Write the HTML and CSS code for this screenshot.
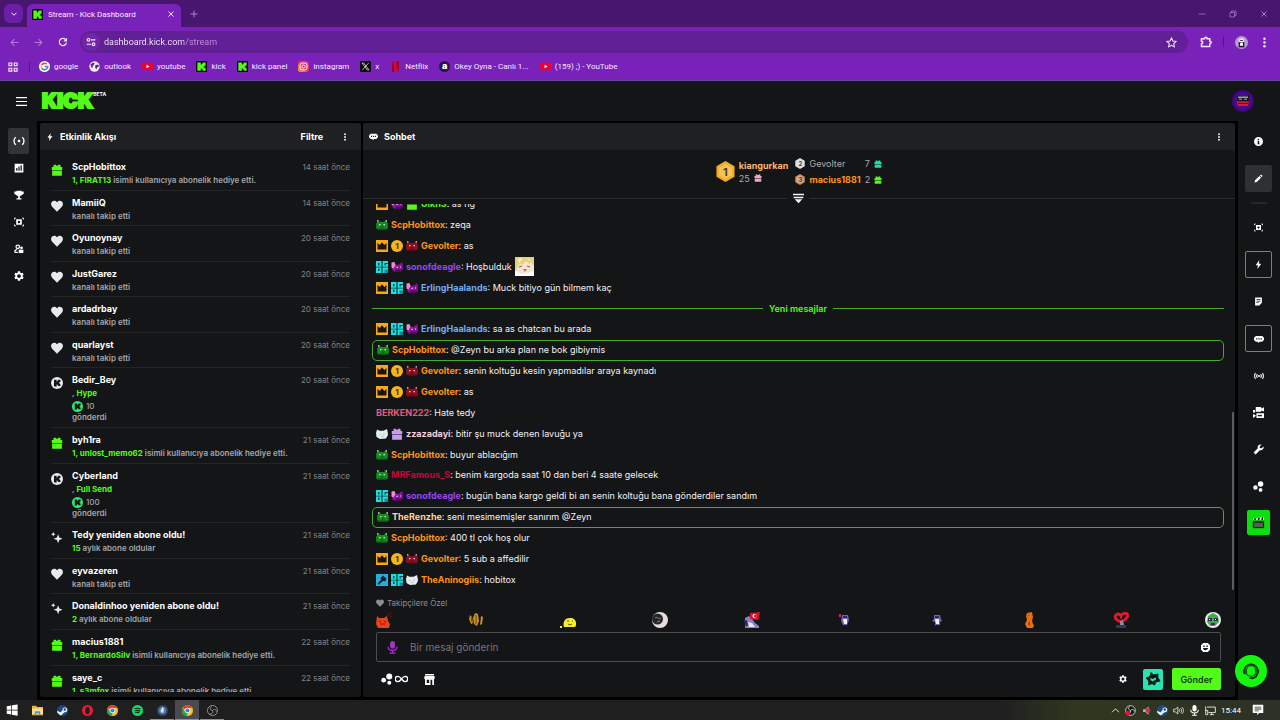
FILE: index.html
```html
<!DOCTYPE html>
<html lang="tr">
<head>
    <meta charset="UTF-8">
    <meta name="viewport" content="width=device-width, initial-scale=1.0">
    <title>Stream - Kick Dashboard</title>
    <link rel="stylesheet" href="styles.css">
</head>
<body>
    <!-- icon sprite -->
    <svg class="sprite" aria-hidden="true">
        <symbol id="kmark" viewBox="0 0 16 16"><rect width="16" height="16" fill="#0b0f0a"/><path fill="#53fc18" d="M2 2h5v3h1.500V3.500H10V2h4v4.500h-1.500V8H11v1h1.500v1.500H14V14h-4v-1.500H8.500V11H7v3H2z"/></symbol>
        <symbol id="down" viewBox="0 0 16 16"><path fill="none" stroke="currentColor" stroke-width="2" d="M3 5.500l5 5 5-5"/></symbol>
        <symbol id="up" viewBox="0 0 16 16"><path fill="none" stroke="currentColor" stroke-width="1.500" d="M2 11l6-6 6 6"/></symbol>
        <symbol id="close" viewBox="0 0 16 16"><path fill="none" stroke="currentColor" stroke-width="2" d="M3 3l10 10M13 3L3 13"/></symbol>
        <symbol id="plus" viewBox="0 0 16 16"><path fill="none" stroke="currentColor" stroke-width="1.800" d="M8 1v14M1 8h14"/></symbol>
        <symbol id="min" viewBox="0 0 16 16"><path stroke="currentColor" stroke-width="1.500" d="M1 8h14"/></symbol>
        <symbol id="restore" viewBox="0 0 16 16"><path fill="none" stroke="currentColor" stroke-width="1.500" d="M2 5h9v9H2zM5 5V2h9v9h-3"/></symbol>
        <symbol id="left" viewBox="0 0 16 16"><path fill="none" stroke="currentColor" stroke-width="1.800" d="M15 8H2M8 2L2 8l6 6"/></symbol>
        <symbol id="right" viewBox="0 0 16 16"><path fill="none" stroke="currentColor" stroke-width="1.800" d="M1 8h13M8 2l6 6-6 6"/></symbol>
        <symbol id="reload" viewBox="0 0 16 16"><path fill="none" stroke="currentColor" stroke-width="2" d="M13.500 9A5.700 5.700 0 1 1 12 4"/><path fill="currentColor" d="M14.500 1v6h-6z"/></symbol>
        <symbol id="tune" viewBox="0 0 16 16"><g fill="none" stroke="currentColor" stroke-width="1.800"><circle cx="4" cy="4.500" r="2.200"/><circle cx="12" cy="11.500" r="2.200"/><path d="M8 4.500h7M1 11.500h7"/></g></symbol>
        <symbol id="star" viewBox="0 0 16 16"><path fill="none" stroke="currentColor" stroke-width="1.500" d="M8 1.500l2 4.300 4.700.6-3.400 3.300.8 4.700L8 12.200l-4.100 2.200.8-4.700L1.300 6.400 6 5.800z"/></symbol>
        <symbol id="puzzle" viewBox="0 0 16 16"><path fill="none" stroke="currentColor" stroke-width="2" d="M2 3.500h4c0-2.500 3.500-2.500 3.500 0H13V7c2.500 0 2.500 3.500 0 3.500V14H2v-3.500c2.200 0 2.200-3.500 0-3.500z"/></symbol>
        <symbol id="dots" viewBox="0 0 16 16"><g fill="currentColor"><circle cx="8" cy="2.500" r="1.800"/><circle cx="8" cy="8" r="1.800"/><circle cx="8" cy="13.500" r="1.800"/></g></symbol>
        <symbol id="apps" viewBox="0 0 16 16"><path fill="none" stroke="currentColor" stroke-width="1.800" d="M1.500 1.500h4.500v4.500H1.500zM10 1.500h4.500v4.500H10zM1.500 10h4.500v4.500H1.500zM10 10h4.500v4.500H10z"/></symbol>
        <symbol id="google" viewBox="0 0 16 16"><circle cx="8" cy="8" r="8" fill="#fff"/><g fill="none" stroke-width="2.400"><path stroke="#ea4335" d="M4 5.700A4.700 4.700 0 0 1 11.300 4.600"/><path stroke="#fbbc05" d="M4 5.700a4.700 4.700 0 0 0 0 4.600"/><path stroke="#34a853" d="M4 10.300a4.700 4.700 0 0 0 7 1.200"/><path stroke="#4285f4" d="M8 8h4.700a4.700 4.700 0 0 1-1.700 3.500"/></g></symbol>
        <symbol id="globe" viewBox="0 0 16 16"><circle cx="8" cy="8" r="7.500" fill="#f5eefb"/><path fill="#5b2590" d="M2 5l4-3 2 1-1 3-2 1 1 2-2 1zM9 6l4-1 2 3-3 1-1 3-2-2z"/></symbol>
        <symbol id="yt" viewBox="0 0 16 16"><rect y="2.500" width="16" height="11" rx="3" fill="#f00032"/><path fill="#fff" d="M6.500 5.500l4.500 2.500-4.500 2.500z"/></symbol>
        <symbol id="insta" viewBox="0 0 16 16"><linearGradient id="ig" x1="0" y1="1" x2="1" y2="0"><stop offset="0" stop-color="#ffb02e"/><stop offset=".5" stop-color="#f4304f"/><stop offset="1" stop-color="#c22bd0"/></linearGradient><rect width="16" height="16" rx="4" fill="url(#ig)"/><g fill="none" stroke="#fff" stroke-width="1.400"><rect x="3" y="3" width="10" height="10" rx="3"/><circle cx="8" cy="8" r="2.300"/></g></symbol>
        <symbol id="xlogo" viewBox="0 0 16 16"><rect width="16" height="16" rx="1" fill="#0a0a0a"/><path fill="none" stroke="#d8d8d8" stroke-width="1.200" d="M3 3h2.500L13 13h-2.500zM12.500 3L3.500 13"/></symbol>
        <symbol id="netflix" viewBox="0 0 16 16"><path fill="#a3001c" d="M3 0h3.500v16H3zM9.500 0H13v16H9.500z"/><path fill="#d8062c" d="M3 0h3.500L13 16H9.500z"/></symbol>
        <symbol id="person" viewBox="0 0 16 16"><circle cx="8" cy="8" r="8" fill="#b79bd6"/><path fill="#eee" d="M5 4.500C5 2 11 2 11 4.500V8H5z"/><path fill="#221b28" d="M4.500 7.500h7V14h-7z"/><path fill="#fff" d="M6.500 8h3l.5 4H6z"/><path stroke="#221b28" stroke-width="1" d="M6 5.500h4"/></symbol>
        <symbol id="menu" viewBox="0 0 16 16"><path stroke="currentColor" stroke-width="1.800" d="M0 2.500h16M0 8h16M0 13.500h16"/></symbol>
        <symbol id="avatar" viewBox="0 0 22 22"><circle cx="11" cy="11" r="11" fill="#3d087c"/><circle cx="11" cy="11" r="9" fill="#4a0a90"/><path fill="#17121d" d="M5 5l1.500 1h9L17 5v6H5z"/><path fill="#8fa0b4" d="M6 6.500h10V8H6z"/><path fill="#d8dde5" d="M7 8.800h3v.8H7zM12 8.800h3v.8h-3z"/><path fill="#c8232f" d="M4.500 11.500h12.500l-1 4.500H6z"/><path fill="#5c0b19" d="M6 13h10v1H6z"/></symbol>
        <symbol id="bolt" viewBox="0 0 16 16"><path fill="currentColor" d="M9.500 0L3 9.500h4L6 16l7-9.500H8.500z"/></symbol>
        <symbol id="live" viewBox="0 0 16 16"><circle cx="8" cy="8" r="1.800" fill="currentColor"/><path fill="none" stroke="currentColor" stroke-width="1.800" d="M4 3C.5 4.500.5 11.500 4 13M12 3c3.500 1.500 3.500 8.500 0 10"/></symbol>
        <symbol id="radio" viewBox="0 0 16 16"><circle cx="8" cy="8" r="1.600" fill="currentColor"/><path fill="none" stroke="currentColor" stroke-width="1.800" d="M2.500 3.500C.5 5.500.5 10.500 2.500 12.500M5.300 5c-1.300 1.700-1.300 4.300 0 6M13.500 3.500c2 2 2 7 0 9M10.700 5c1.300 1.700 1.300 4.300 0 6"/></symbol>
        <symbol id="chart" viewBox="0 0 16 16"><path fill="currentColor" fill-rule="evenodd" d="M1 1h14v14H1zM3.500 8v4.500h2V8zM7 5.500v7h2v-7zM10.500 3.500v9h2v-9z"/></symbol>
        <symbol id="cup" viewBox="0 0 16 16"><path fill="currentColor" d="M4 1h8v1.500h3.500V6L12 8.500 9.300 10.500V13H12v2H4v-2h2.700v-2.500L4 8.500.5 6V2.500H4z"/></symbol>
        <symbol id="focus" viewBox="0 0 16 16"><path fill="currentColor" fill-rule="evenodd" d="M3.500 3.500h9v9h-9zM8 6a2 2 0 1 0 0 4 2 2 0 0 0 0-4z"/><path fill="none" stroke="currentColor" stroke-width="1.500" d="M.8 4V1.800H3M13 1.800h2.200V4M.8 12v2.200H3M13 14.200h2.200V12"/></symbol>
        <symbol id="people" viewBox="0 0 16 16"><circle cx="6" cy="4.500" r="2.800" fill="none" stroke="currentColor" stroke-width="2"/><path fill="none" stroke="currentColor" stroke-width="2" d="M1.500 14V11l3-2.500M6 13.500H2"/><circle cx="12" cy="6" r="2.200" fill="currentColor"/><path fill="currentColor" d="M7.500 9H15v5.500H7.500z"/></symbol>
        <symbol id="gear" viewBox="0 0 16 16"><path fill="currentColor" fill-rule="evenodd" d="M6.300.5h3.400l.5 2.200 1.300.8 2.200-.8 1.700 3L13.800 7.200v1.600l1.600 1.500-1.700 3-2.200-.8-1.300.8-.5 2.200H6.300l-.5-2.200-1.300-.8-2.200.8-1.700-3 1.600-1.500V7.200L.6 5.700l1.700-3 2.200.8 1.300-.8zM8 5a3 3 0 1 0 0 6 3 3 0 0 0 0-6z"/></symbol>
        <symbol id="gift" viewBox="0 0 16 16"><path fill="currentColor" d="M1 4h2.500L3 1.500 5.500.5 8 2.500 10.500.5l2.500 1L12.500 4H15v4H1zM1.500 8.800h13V15.500h-13z"/></symbol>
        <symbol id="heart" viewBox="0 0 16 16"><path fill="currentColor" d="M8 15.500L1.500 9C-1.500 5.500.5 1 4.500 1 6 1 7.200 1.800 8 3c.8-1.200 2-2 3.500-2 4 0 6 4.500 3 8z"/></symbol>
        <symbol id="coin" viewBox="0 0 16 16"><circle cx="8" cy="8" r="8" fill="currentColor"/><path fill="#141517" d="M4 3.500h3.500v2.500h1V4.500h1v-1h3v3.200h-1v.9h-.9v.8h.9v1h1v2.600h-3v-1h-1V10h-1v2.500H4z"/></symbol>
        <symbol id="sparkle" viewBox="0 0 16 16"><path fill="currentColor" d="M9.500 3l1.600 4.400L15.500 9l-4.400 1.600L9.500 15l-1.600-4.400L3.500 9l4.400-1.600zM3 0l.9 2.100L6 3l-2.100.9L3 6l-.9-2.100L0 3l2.100-.9z"/></symbol>
        <symbol id="bubble" viewBox="0 0 16 16"><path fill="currentColor" fill-rule="evenodd" d="M3 3h10l3 3v3.500l-3 3H9L7 14.500l-1-2H3l-3-3V6zM3.500 6.800v2h2v-2zM7 6.800v2h2v-2zM10.500 6.800v2h2v-2z"/></symbol>
        <symbol id="collapse" viewBox="0 0 16 16"><path fill="#f4f4f4" d="M0 1h16v2.200H0zM1 5.500h14v2H1zM2.500 9h11L8 15z"/></symbol>
        <symbol id="info" viewBox="0 0 16 16"><path fill="currentColor" fill-rule="evenodd" d="M8 0a8 8 0 1 0 0 16A8 8 0 0 0 8 0zM6.800 3h2.400v2.200H6.800zM6 6.500h3.200v5H10V13H6v-1.500h.8V8H6z"/></symbol>
        <symbol id="pencil" viewBox="0 0 16 16"><path fill="currentColor" d="M1 15l.8-4L9.500 3.500l3 3L5 14.200zM10.500 2.500L12.500.7l2.800 2.800-1.800 2z"/></symbol>
        <symbol id="note" viewBox="0 0 16 16"><path fill="currentColor" fill-rule="evenodd" d="M2 1h12v9l-4.500 5H2zM4.500 4v1.300h7V4zM4.500 6.700V8h7V6.700zM4.500 9.500v1.300H8V9.500z"/></symbol>
        <symbol id="scenes" viewBox="0 0 16 16"><path fill="currentColor" d="M4 0h8v2l4-1.500v6L12 5v2H4zM0 4.500h3V8H0zM5 9h11v7H5zM0 10l4 2v1l-4 3z"/><path fill="#141517" d="M7 11.500h6v2H7z"/></symbol>
        <symbol id="wrench" viewBox="0 0 16 16"><path fill="currentColor" d="M15.300 3.500L12.500 6 10 5.800 9.700 3.500l2.700-2.600C9 0 6 2.500 7 6L.8 12.200l3 3L10 9c3.500 1.200 6.300-2.200 5.300-5.500z"/></symbol>
        <symbol id="bubbles" viewBox="0 0 16 16"><g fill="currentColor"><circle cx="11" cy="4.500" r="4"/><circle cx="3.500" cy="9.500" r="3.200"/><circle cx="11" cy="13" r="2.700"/></g></symbol>
        <symbol id="clap" viewBox="0 0 16 16"><path fill="#1d2a1d" d="M1 6h14v9H1z"/><path fill="#555d55" d="M2.500 8.500h11v5h-11z"/><path fill="#eee" d="M1 3.500L14.500 1l.5 4H1.500z"/><path fill="#111" d="M3 3.200L5.500 2.700 4.500 5H2.500zM7.500 2.400l2.500-.5L9 5H7zM12 1.500l2-.4L13.500 5h-2z"/></symbol>
        <symbol id="headset" viewBox="0 0 20 20"><path fill="none" stroke="#0a5c0e" stroke-width="1.200" d="M5 12V9a5 5 0 0 1 10 0v3c0 5-10 5-10 0"/><path fill="none" stroke="#062f08" stroke-width="1.800" d="M2.500 10a7.500 7.500 0 0 1 15 0c0 4.500-2 7.500-6.500 8.500"/><path fill="#062f08" d="M1 8h3v5.500H2.500L1 12zM16 8h3v4l-1.500 1.500H16zM8.500 17h3.500v2H8.500z"/></symbol>
        <symbol id="mic" viewBox="0 0 16 16"><rect x="5" y="0" width="6" height="9.500" rx="3" fill="currentColor"/><path fill="none" stroke="currentColor" stroke-width="1.500" d="M2.500 7c0 6 11 6 11 0M8 11.500V15M4.500 15h7"/></symbol>
        <symbol id="smile" viewBox="0 0 16 16"><path fill="currentColor" fill-rule="evenodd" d="M4 0h8l4 4v8l-4 4H4l-4-4V4zM4 4.500v2.500h2.500V4.500zM9.500 4.500v2.500H12V4.500zM3.500 9c.5 5 8.500 5 9 0z"/></symbol>
        <symbol id="infinity" viewBox="0 0 24 14"><path fill="none" stroke="currentColor" stroke-width="2.400" d="M12 7c-3-4-4.500-5-6.500-5a5 5 0 0 0 0 10c2 0 3.500-1 6.500-5s4.500-5 6.500-5a5 5 0 0 1 0 10c-2 0-3.500-1-6.500-5z"/></symbol>
        <symbol id="store" viewBox="0 0 16 16"><path fill="currentColor" fill-rule="evenodd" d="M1.500 0h13v2h-13zM1 3h14l1 4h-1.500v9h-13V7H0zM4 8.500V13h3.500V8.500zM9.500 8.500V16H12V8.500z"/></symbol>
        <symbol id="predict" viewBox="0 0 16 16"><path fill="#0d1b18" stroke="#0d1b18" stroke-linejoin="round" d="M6 1.500l2.500 2.500L13 3l-.2 3.500L15 10l-4 .8L9.500 14l-2.500-1.500-3.500 1.500.3-4L1 7l4-1.500z"/><path fill="#24e5b5" d="M5.500 6.800l2 1.200L11 6.500V8.500L7.500 10.500l-2-1.500z"/></symbol>

        <!-- chat badges -->
        <symbol id="b-crown" viewBox="0 0 12 12"><rect width="12" height="12" fill="#f7a91b"/><path fill="#1c150a" d="M1.500 3l2.200 2L6 2.200 8.300 5l2.200-2v6.500h-9z"/></symbol>
        <symbol id="b-cat" viewBox="0 0 12 12"><path fill="currentColor" d="M1 1.500h2.500V3h5V1.500H11V4h.8v5.500L10.500 11h-9L.2 9.500V4H1z"/><path fill="#fff" d="M1 1.200h1.300v1.300H1zM9.700 1.200H11v1.300H9.700z" opacity=".8"/><path fill="#fff" d="M3 5h1.500v1.200H3zM7.500 5H9v1.200H7.500z" opacity=".75"/><path fill="#000" d="M4.500 7.500h3v1h-3zM.2 9.500h11.600L10.500 11h-9z" opacity=".4"/></symbol>
        <symbol id="b-side" viewBox="0 0 12 12"><path fill="#8b1599" d="M2.500 2.500L5 3.800h3L11 1l.8 3v4.500L9.500 11h-6L1 8.500z"/><path fill="#f08ad8" d="M.5 1.500L3.500 1 4.500 4 2.500 7.500.5 6.500z"/><path fill="#4b0867" d="M5 8.500h6L9.500 11h-6z"/><path fill="#ffd1f5" d="M5.500 5.800h1.200V7H5.500zM9 5.500h1v1H9z"/></symbol>
        <symbol id="b-white" viewBox="0 0 12 12"><path fill="#e3ecee" d="M1 1.500l2.500 1.300h4L11 1l.7 3 .3 3-2 3.500-6 .5L.5 9 0 5z"/><path fill="#9db3b9" d="M3.500 6h1v1h-1zM7.500 5.500h1v1h-1zM5 8.500l2.500-.7v.6l-2 .6z"/></symbol>
        <symbol id="b-og" viewBox="0 0 12 12"><path fill="#19e3dc" d="M0 0h5.500v12H0zM6.500 0H12v12H6.500z"/><path fill="#0d4348" d="M2 2h1.500v2.500H2zM2 7.500h1.500V10H2zM8.500 2H12v1H9.800v1.500H8.500zM0 5.700h12v.8H0z"/><path fill="#1689a0" d="M8.500 8.500H12V12H8.500z"/></symbol>
        <symbol id="b-mod" viewBox="0 0 12 12"><rect width="12" height="12" fill="#22aee0"/><path fill="#0b1c26" d="M1.500 9.500l4-4L4.300 4.300 7 1.500l3.500 3.300L9 7.500 7 6.800l-4 4z"/></symbol>
        <symbol id="hex" viewBox="0 0 20 22"><path fill="currentColor" d="M10 0l9.500 5.500v11L10 22 .5 16.500v-11z"/><path fill="#fff" opacity=".25" d="M10 3l6.800 4v8L10 19l-6.800-4V7z"/></symbol>

        <!-- task bar -->
        <symbol id="win" viewBox="0 0 16 16"><path fill="#fff" d="M1 3l6-1v5.500H1zM8 1.800L15.500.5v7H8zM1 8.500h6V14l-6-1zM8 8.500h7.500v7L8 14.200z"/></symbol>
        <symbol id="folder" viewBox="0 0 16 16"><path fill="#e8b53c" d="M0 1h6l1.500 2H16v12H0z"/><path fill="#ffe08a" d="M0 5h16v8H0z"/><path fill="#3f9be0" d="M4 9h8v6h-2v-3H6v3H4z"/></symbol>
        <symbol id="steam" viewBox="0 0 16 16"><circle cx="8" cy="8" r="8" fill="#174a86"/><path fill="#e9f1f8" d="M0 8.500l5 2 3-3a3.500 3.500 0 1 1 3 3l-3 2.500a2.600 2.600 0 0 1-5 0L.5 11.500z"/><circle cx="11.300" cy="6.500" r="1.800" fill="#174a86"/></symbol>
        <symbol id="opera" viewBox="0 0 16 16"><path fill="#e81c34" fill-rule="evenodd" d="M8 0a8 8 0 1 0 0 16A8 8 0 0 0 8 0zM8 2.500c4.500 0 4.500 11 0 11s-4.500-11 0-11z"/></symbol>
        <symbol id="chrome" viewBox="0 0 16 16"><circle cx="8" cy="8" r="8" fill="#f8c41c"/><path fill="#e33b2e" d="M8 8L1 4.200A8 8 0 0 1 15 4.200H8z"/><path fill="#25a050" d="M1 4.200L5 10l3 2-1.200 4A8 8 0 0 1 1 4.200z"/><circle cx="8" cy="8" r="4" fill="#fff"/><circle cx="8" cy="8" r="3" fill="#3b7de8"/></symbol>
        <symbol id="spotify" viewBox="0 0 16 16"><circle cx="8" cy="8" r="8" fill="#1ed760"/><path fill="none" stroke="#0c2415" stroke-width="1.500" d="M3.500 5.500c3-1 6.500-.7 9.200.8M4 8.300c2.700-.8 5.500-.5 7.800.8M4.500 11c2-.5 4.500-.3 6.200.7"/></symbol>
        <symbol id="orb" viewBox="0 0 16 16"><circle cx="8" cy="8" r="8" fill="#2c4676"/><circle cx="8" cy="8" r="5.500" fill="#5479ad"/><path fill="#d9e3ee" d="M8 2.500l2 3-.5 5-2.500 1-2-3z"/></symbol>
        <symbol id="obs" viewBox="0 0 16 16"><circle cx="8" cy="8" r="7.300" fill="#1b1b1b" stroke="#a9a9a9" stroke-width="1.200"/><path fill="none" stroke="#a9a9a9" stroke-width="1.200" d="M8 8C4 8 4 3 7 2.500M8 8c2-3.500 6.300-1 5.500 1.500M8 8c2 3.500-2 6-4 4.500"/></symbol>
        <symbol id="rec" viewBox="0 0 16 16"><circle cx="8" cy="8" r="7" fill="#151515" stroke="#ddd" stroke-width="1.300"/><path fill="none" stroke="#ddd" stroke-width="1.300" d="M8 8C5 7 4 4 7 2.500M8 8c2-3 6-1 5.500 1.500M8 8c1 3-2 5-4 4"/><circle cx="4" cy="12" r="3.500" fill="#e0152c"/></symbol>
        <symbol id="muted" viewBox="0 0 16 16"><path fill="#b5b5b5" d="M3 6h3l5-4v12l-5-4H3z"/><circle cx="10" cy="8" r="3.500" fill="#c23a4a"/></symbol>
        <symbol id="speaker" viewBox="0 0 16 16"><path fill="none" stroke="#eee" stroke-width="1.200" d="M1 6h2.500L7 3v10l-3.500-3H1zM9 6c1 1 1 3 0 4M11 4.500c2 2 2 5 0 7M13 3c3 3 3 7 0 10"/></symbol>
        <symbol id="monitor" viewBox="0 0 16 16"><path fill="none" stroke="#eee" stroke-width="1.300" d="M3 3h12v8H5M7 14h6M9.500 11v3M1 2v12h3V8H1"/></symbol>
        <symbol id="action" viewBox="0 0 16 16"><path fill="#fff" fill-rule="evenodd" d="M1 1h14v11H9.500L7 15v-3H1zM3.500 3.500v1.200h9V3.500zM3.500 6v1.200h9V6zM3.500 8.500v1.200H9V8.500z"/></symbol>
    </svg>

    <!-- browser -->
    <header class="browser">
        <div class="tabstrip">
            <button class="tab-search" aria-label="Sekme ara"><svg class="ic-8"><use href="#down"/></svg></button>
            <div class="tab">
                <svg class="ic-11"><use href="#kmark"/></svg>
                <span class="tab-title">Stream - Kick Dashboard</span>
                <button aria-label="Sekmeyi kapat"><svg class="ic-8"><use href="#close"/></svg></button>
            </div>
            <button class="new-tab" aria-label="Yeni sekme"><svg class="ic-8"><use href="#plus"/></svg></button>
            <div class="window-buttons">
                <button aria-label="Simge durumuna küçült"><svg class="ic-8"><use href="#min"/></svg></button>
                <button aria-label="Geri yükle"><svg class="ic-8"><use href="#restore"/></svg></button>
                <button aria-label="Kapat"><svg class="ic-8"><use href="#close"/></svg></button>
            </div>
        </div>
        <div class="toolbar">
            <button class="dim" aria-label="Geri"><svg class="ic-9"><use href="#left"/></svg></button>
            <button class="dim" aria-label="İleri"><svg class="ic-9"><use href="#right"/></svg></button>
            <button aria-label="Yenile"><svg class="ic-10"><use href="#reload"/></svg></button>
            <div class="omnibox">
                <button class="site-info" aria-label="Site bilgileri"><svg class="ic-10"><use href="#tune"/></svg></button>
                <input class="url" type="text" aria-label="Adres" value="dashboard.kick.com/stream">
                <button aria-label="Yer işareti ekle"><svg class="ic-11"><use href="#star"/></svg></button>
            </div>
            <div class="toolbar-end">
                <button aria-label="Uzantılar"><svg class="ic-12"><use href="#puzzle"/></svg></button>
                <span class="bar"></span>
                <button aria-label="Profil"><svg class="ic-13"><use href="#person"/></svg></button>
                <button aria-label="Menü"><svg class="ic-11"><use href="#dots"/></svg></button>
            </div>
        </div>
        <nav class="bookmarks">
            <button aria-label="Uygulamalar"><svg class="ic-10"><use href="#apps"/></svg></button>
            <span class="bar"></span>
            <a href="#"><svg class="ic-11"><use href="#google"/></svg>google</a>
            <a href="#"><svg class="ic-11"><use href="#globe"/></svg>outlook</a>
            <a href="#"><svg class="ic-11"><use href="#yt"/></svg>youtube</a>
            <a href="#"><svg class="ic-11"><use href="#kmark"/></svg>kick</a>
            <a href="#"><svg class="ic-11"><use href="#kmark"/></svg>kick panel</a>
            <a href="#"><svg class="ic-11"><use href="#insta"/></svg>instagram</a>
            <a href="#"><svg class="ic-11"><use href="#xlogo"/></svg>x</a>
            <a href="#"><svg class="ic-11"><use href="#netflix"/></svg>Netflix</a>
            <a href="#"><i class="okey">a</i>Okey Oyna - Canlı 1...</a>
            <a href="#"><svg class="ic-11"><use href="#yt"/></svg>(159) ;) - YouTube</a>
        </nav>
    </header>

    <div class="app">
        <header class="app-header">
            <button aria-label="Menü"><svg class="ic-11"><use href="#menu"/></svg></button>
            <a class="logo" href="#"><span class="logo-word">KICK</span><span class="logo-beta">BETA</span></a>
            <button class="profile" aria-label="Hesap"><svg class="ic-22"><use href="#avatar"/></svg></button>
        </header>

        <nav class="side">
            <button class="active" aria-label="Yayın"><svg class="ic-12"><use href="#live"/></svg></button>
            <button aria-label="Analiz"><svg class="ic-10"><use href="#chart"/></svg></button>
            <button aria-label="Başarılar"><svg class="ic-10"><use href="#cup"/></svg></button>
            <button aria-label="Kanal"><svg class="ic-10"><use href="#focus"/></svg></button>
            <button aria-label="Topluluk"><svg class="ic-10"><use href="#people"/></svg></button>
            <button aria-label="Ayarlar"><svg class="ic-10"><use href="#gear"/></svg></button>
        </nav>

        <main class="panels">
            <section class="panel activity">
                <div class="panel-header">
                    <svg class="ic-8"><use href="#bolt"/></svg>
                    <h2>Etkinlik Akışı</h2>
                    <button class="filter">Filtre</button>
                    <button aria-label="Seçenekler"><svg class="ic-8"><use href="#dots"/></svg></button>
                </div>
                <div class="feed">
                    <ul>
                        <li><svg class="ic-12 green"><use href="#gift"/></svg><div><h3>ScpHobittox</h3><p><b>1, FIRAT13</b> isimli kullanıcıya abonelik hediye etti.</p></div><time>14 saat önce</time></li>
                        <li><svg class="ic-12"><use href="#heart"/></svg><div><h3>MamiiQ</h3><p>kanalı takip etti</p></div><time>14 saat önce</time></li>
                        <li><svg class="ic-12"><use href="#heart"/></svg><div><h3>Oyunoynay</h3><p>kanalı takip etti</p></div><time>20 saat önce</time></li>
                        <li><svg class="ic-12"><use href="#heart"/></svg><div><h3>JustGarez</h3><p>kanalı takip etti</p></div><time>20 saat önce</time></li>
                        <li><svg class="ic-12"><use href="#heart"/></svg><div><h3>ardadrbay</h3><p>kanalı takip etti</p></div><time>20 saat önce</time></li>
                        <li><svg class="ic-12"><use href="#heart"/></svg><div><h3>quarlayst</h3><p>kanalı takip etti</p></div><time>20 saat önce</time></li>
                        <li class="tall"><svg class="ic-12"><use href="#coin"/></svg><div><h3>Bedir_Bey</h3><p>, <b>Hype</b></p><p class="kicks"><svg class="ic-11"><use href="#coin"/></svg>10</p><p class="sent">gönderdi</p></div><time>20 saat önce</time></li>
                        <li><svg class="ic-12 green"><use href="#gift"/></svg><div><h3>byh1ra</h3><p><b>1, unlost_memo62</b> isimli kullanıcıya abonelik hediye etti.</p></div><time>21 saat önce</time></li>
                        <li class="tall"><svg class="ic-12"><use href="#coin"/></svg><div><h3>Cyberland</h3><p>, <b>Full Send</b></p><p class="kicks"><svg class="ic-11"><use href="#coin"/></svg>100</p><p class="sent">gönderdi</p></div><time>21 saat önce</time></li>
                        <li><svg class="ic-12"><use href="#sparkle"/></svg><div><h3>Tedy yeniden abone oldu!</h3><p><b>15</b> aylık abone oldular</p></div><time>21 saat önce</time></li>
                        <li><svg class="ic-12"><use href="#heart"/></svg><div><h3>eyvazeren</h3><p>kanalı takip etti</p></div><time>21 saat önce</time></li>
                        <li><svg class="ic-12"><use href="#sparkle"/></svg><div><h3>Donaldinhoo yeniden abone oldu!</h3><p><b>2</b> aylık abone oldular</p></div><time>21 saat önce</time></li>
                        <li><svg class="ic-12 green"><use href="#gift"/></svg><div><h3>macius1881</h3><p><b>1, BernardoSilv</b> isimli kullanıcıya abonelik hediye etti.</p></div><time>22 saat önce</time></li>
                        <li><svg class="ic-12 green"><use href="#gift"/></svg><div><h3>saye_c</h3><p><b>1, s3mfox</b> isimli kullanıcıya abonelik hediye etti.</p></div><time>22 saat önce</time></li>
                    </ul>
                </div>
            </section>

            <section class="panel chat">
                <div class="panel-header">
                    <svg class="ic-9"><use href="#bubble"/></svg>
                    <h2>Sohbet</h2>
                    <button class="push" aria-label="Seçenekler"><svg class="ic-8"><use href="#dots"/></svg></button>
                </div>
                <div class="podium">
                    <span class="medal medal-big"><svg><use href="#hex"/></svg><i>1</i></span>
                    <div class="first">
                        <strong class="peach">kiangurkan</strong>
                        <span>25 <svg class="ic-8 pink"><use href="#gift"/></svg></span>
                    </div>
                    <div class="runners">
                        <span class="medal silver"><svg><use href="#hex"/></svg><i>2</i></span><span>Gevolter</span><span>7</span><svg class="ic-8 teal"><use href="#gift"/></svg>
                        <span class="medal bronze"><svg><use href="#hex"/></svg><i>3</i></span><strong class="orange">macius1881</strong><span>2</span><svg class="ic-8 green"><use href="#gift"/></svg>
                    </div>
                    <button class="collapse" aria-label="Sıralamayı daralt"><svg class="ic-11"><use href="#collapse"/></svg></button>
                </div>
                <div class="messages">
                    <div class="message-list">
                        <p><svg><use href="#b-crown"/></svg><svg><use href="#b-side"/></svg><svg class="green"><use href="#gift"/></svg><span><b class="green">Ulkn3</b>: as ng</span></p>
                        <p><svg class="cat-green"><use href="#b-cat"/></svg><span><b class="orange">ScpHobittox</b>: zeqa</span></p>
                        <p><svg><use href="#b-crown"/></svg><i class="top-one">1</i><svg class="cat-red"><use href="#b-cat"/></svg><span><b class="orange">Gevolter</b>: as</span></p>
                        <p><svg><use href="#b-og"/></svg><svg><use href="#b-side"/></svg><span><b class="purple">sonofdeagle</b>: Hoşbulduk</span>
                            <svg class="emote" viewBox="0 0 19 19"><rect width="19" height="19" fill="#f4e4d0"/><path fill="#e4d27b" d="M0 0h19v9l-3-4-2 2-3-3-4 4-2-2-3 5-2 3z"/><path fill="#f7f0c8" d="M3 2l5-1-4 5zM12 1l5 3-4-1z"/><path fill="none" stroke="#8f5b50" d="M4 10l3-1M12 9l3 1"/><path fill="#c86b66" d="M8 12h4l-2 3z"/><path fill="#fff" d="M0 14l6 3 7-1 6-2v5H0z"/></svg></p>
                        <p><svg><use href="#b-crown"/></svg><svg><use href="#b-og"/></svg><svg><use href="#b-side"/></svg><span><b class="blue">ErlingHaalands</b>: Muck bitiyo gün bilmem kaç</span></p>
                        <div class="new-messages">Yeni mesajlar</div>
                        <p><svg><use href="#b-crown"/></svg><svg><use href="#b-og"/></svg><svg><use href="#b-side"/></svg><span><b class="blue">ErlingHaalands</b>: sa as chatcan bu arada</span></p>
                        <p class="mention"><svg class="cat-green"><use href="#b-cat"/></svg><span><b class="orange">ScpHobittox</b>: @Zeyn bu arka plan ne bok gibiymis</span></p>
                        <p><svg><use href="#b-crown"/></svg><i class="top-one">1</i><svg class="cat-red"><use href="#b-cat"/></svg><span><b class="orange">Gevolter</b>: senin koltuğu kesin yapmadılar araya kaynadı</span></p>
                        <p><svg><use href="#b-crown"/></svg><i class="top-one">1</i><svg class="cat-red"><use href="#b-cat"/></svg><span><b class="orange">Gevolter</b>: as</span></p>
                        <p><span><b class="rose">BERKEN222</b>: Hate tedy</span></p>
                        <p><svg><use href="#b-white"/></svg><svg class="lilac"><use href="#gift"/></svg><span><b class="blush">zzazadayi</b>: bitir şu muck denen lavuğu ya</span></p>
                        <p><svg class="cat-green"><use href="#b-cat"/></svg><span><b class="orange">ScpHobittox</b>: buyur ablacığım</span></p>
                        <p><svg class="cat-green"><use href="#b-cat"/></svg><span><b class="crimson">MRFamous_S</b>: benim kargoda saat 10 dan beri 4 saate gelecek</span></p>
                        <p><svg><use href="#b-og"/></svg><svg><use href="#b-side"/></svg><span><b class="purple">sonofdeagle</b>: bugün bana kargo geldi bi an senin koltuğu bana gönderdiler sandım</span></p>
                        <p class="mention"><svg class="cat-green"><use href="#b-cat"/></svg><span><b class="cream">TheRenzhe</b>: seni mesimemişler sanırım @Zeyn</span></p>
                        <p><svg class="cat-green"><use href="#b-cat"/></svg><span><b class="orange">ScpHobittox</b>: 400 tl çok hoş olur</span></p>
                        <p><svg><use href="#b-crown"/></svg><i class="top-one">1</i><svg class="cat-red"><use href="#b-cat"/></svg><span><b class="orange">Gevolter</b>: 5 sub a affedilir</span></p>
                        <p><svg><use href="#b-mod"/></svg><svg><use href="#b-og"/></svg><svg><use href="#b-white"/></svg><span><b class="orange">TheAninogiis</b>: hobitox</span></p>
                    </div>
                    <span class="scroll-thumb"></span>
                </div>
                <form class="composer">
                    <div class="notice"><svg class="ic-8"><use href="#heart"/></svg>Takipçilere Özel</div>
                    <div class="emotes">
                        <button type="button" aria-label="Kedi"><svg viewBox="0 0 16 16"><path fill="#e8431d" d="M1 4l2 2h5l3-2 1 5 2 3-1 4H2L0 12z"/><path stroke="#7b1607" fill="none" d="M3 9l2 1M8 9l2 1M4 12h5M12 2l1 2M14 0l1 2M14 5l2-1"/></svg></button>
                        <button type="button" aria-label="Alkış"><svg viewBox="0 0 16 16"><path fill="#c9902c" d="M7 1l3 1 1 7-2 5-3-2-1-6zM2 3l2 2 1 6-2 1-2-5zM13 4l2 1-1 7-2 1z"/><path stroke="#6b4711" fill="none" d="M8 3v9M3 5l1 5"/></svg></button>
                        <button type="button" aria-label="Sarı"><svg viewBox="0 0 16 16"><path fill="#f5ee2e" d="M4 15c-1-2-1-9 6-9s7 7 5 9zM0 14h2v2H0z"/><path stroke="#5b5510" fill="none" d="M7 9h2M12 9h1M8 12c1 1 3 1 4 0"/></svg></button>
                        <button type="button" aria-label="Ay"><svg viewBox="0 0 16 16"><circle cx="8" cy="8" r="8" fill="#e6dcdc"/><circle cx="5.500" cy="7" r="5.500" fill="#26262a"/><path stroke="#8b8686" fill="none" d="M3 6c2-2 4 2 6 0M5 10l3-1"/></svg></button>
                        <button type="button" aria-label="Bayrak"><svg viewBox="0 0 16 16"><path fill="#8383cf" d="M1 6l4-2 3 3 3 4 4 3v2H1z"/><path fill="#e4e4f5" d="M4 10l4 1 3 4H5z"/><path fill="#dd1428" d="M6 1l10-1-2 8-8-1z"/><circle cx="10.500" cy="4" r="2" fill="#fff"/><circle cx="11.300" cy="4" r="1.500" fill="#dd1428"/><path fill="#2d2b5c" d="M0 9l3-1 1 5-2 2z"/></svg></button>
                        <button type="button" aria-label="Penguen gül"><svg viewBox="0 0 16 16"><path fill="#6a66b4" d="M5 3h6l1 5-2 5H6L4 9z"/><path fill="#f0f0fa" d="M6 7h4v5H7z"/><path fill="#2e2a6b" d="M6 4h4v2H6zM6 13h1v1H6zM9 13h1v1H9z"/><path fill="#d9234f" d="M2 2h2v3H2z"/></svg></button>
                        <button type="button" aria-label="Penguen"><svg viewBox="0 0 16 16"><path fill="#6a66b4" d="M5 3h6l1 4 1 2-2 1v3H6v-3L3 9l2-2z"/><path fill="#f0f0fa" d="M6 7h4v5H7z"/><path fill="#2e2a6b" d="M6 4h4v2H6zM6 13h1v1H6zM9 13h1v1H9z"/></svg></button>
                        <button type="button" aria-label="Sincap"><svg viewBox="0 0 16 16"><path fill="#e56f13" d="M6 1l5-1 1 5-1 4 1 3 1 1-1 3H6l-2-4 2-4-1-4z"/><path fill="#8d3905" d="M7 3h1v1H7zM9 9l-2 3 2 2z"/></svg></button>
                        <button type="button" aria-label="Kalp"><svg viewBox="0 0 16 16"><path fill="none" stroke="#e0182b" stroke-width="3" d="M7 10L3 7c-3-4 3-7 5-3 1-3 7-4 7 0l-4 5"/><path fill="#9a8890" d="M7 8l1 1 2-2 1 6-2 2H7z"/><path fill="#2c3b58" d="M3 13h10v3H3z"/></svg></button>
                        <button type="button" aria-label="Surat"><svg viewBox="0 0 16 16"><circle cx="8" cy="8" r="8" fill="#e8eee8"/><path fill="#36b345" d="M3 4l5-3 5 3 1 6-4 4H5l-3-4z"/><path fill="#4b1f59" d="M3 6h4v3H3zM9 6h4v3H9zM6 11h4v2H6z"/><path fill="#fff" d="M4 7h1v1H4zM10 7h1v1h-1z"/></svg></button>
                    </div>
                    <div class="input-box">
                        <button type="button" class="mic" aria-label="Sesli mesaj"><svg class="ic-13"><use href="#mic"/></svg></button>
                        <input type="text" aria-label="Mesaj" placeholder="Bir mesaj gönderin">
                        <button type="button" aria-label="Emoji"><svg class="ic-9"><use href="#smile"/></svg></button>
                    </div>
                    <div class="actions">
                        <button type="button" class="points" aria-label="Kanal puanları"><svg class="ic-12"><use href="#bubbles"/></svg><svg class="ic-inf"><use href="#infinity"/></svg></button>
                        <button type="button" aria-label="Mağaza"><svg class="ic-11"><use href="#store"/></svg></button>
                        <button type="button" class="push" aria-label="Sohbet ayarları"><svg class="ic-8"><use href="#gear"/></svg></button>
                        <button type="button" class="predict" aria-label="Tahmin"><svg class="ic-16"><use href="#predict"/></svg></button>
                        <button type="submit" class="send">Gönder</button>
                    </div>
                </form>
            </section>
        </main>

        <aside class="tools">
            <button aria-label="Bilgi"><svg class="ic-9"><use href="#info"/></svg></button>
            <button class="filled" aria-label="Düzenle"><svg class="ic-9"><use href="#pencil"/></svg></button>
            <hr>
            <button aria-label="Önizleme"><svg class="ic-9"><use href="#focus"/></svg></button>
            <button class="on" aria-label="Etkinlik"><svg class="ic-9"><use href="#bolt"/></svg></button>
            <button aria-label="Notlar"><svg class="ic-9"><use href="#note"/></svg></button>
            <button class="on" aria-label="Sohbet"><svg class="ic-10"><use href="#bubble"/></svg></button>
            <button aria-label="Yayın durumu"><svg class="ic-10"><use href="#radio"/></svg></button>
            <button aria-label="Sahneler"><svg class="ic-11"><use href="#scenes"/></svg></button>
            <button aria-label="Araçlar"><svg class="ic-11"><use href="#wrench"/></svg></button>
            <button aria-label="Puanlar"><svg class="ic-11"><use href="#bubbles"/></svg></button>
            <button class="clip" aria-label="Klip"><svg class="ic-13"><use href="#clap"/></svg></button>
            <button class="support" aria-label="Destek"><svg class="ic-18"><use href="#headset"/></svg></button>
        </aside>
    </div>

    <footer class="taskbar">
        <button aria-label="Başlat"><svg class="ic-12"><use href="#win"/></svg></button>
        <button aria-label="Dosya Gezgini"><svg class="ic-11"><use href="#folder"/></svg></button>
        <button aria-label="Steam"><svg class="ic-11"><use href="#steam"/></svg></button>
        <button aria-label="Opera"><svg class="ic-11"><use href="#opera"/></svg></button>
        <button aria-label="Chrome"><svg class="ic-11"><use href="#chrome"/></svg></button>
        <button aria-label="Spotify"><svg class="ic-11"><use href="#spotify"/></svg></button>
        <button class="running" aria-label="Uygulama"><svg class="ic-11"><use href="#orb"/></svg></button>
        <button class="running current" aria-label="Chrome penceresi"><svg class="ic-11"><use href="#chrome"/></svg></button>
        <button class="running" aria-label="OBS"><svg class="ic-11"><use href="#obs"/></svg></button>
        <div class="tray">
            <svg class="ic-9"><use href="#up"/></svg>
            <svg class="ic-11"><use href="#rec"/></svg>
            <svg class="ic-11"><use href="#muted"/></svg>
            <svg class="ic-11"><use href="#steam"/></svg>
            <svg class="ic-11"><use href="#speaker"/></svg>
            <svg class="ic-11"><use href="#mic"/></svg>
            <svg class="ic-11"><use href="#monitor"/></svg>
            <time>15:44</time>
            <svg class="ic-12 center"><use href="#action"/></svg>
        </div>
    </footer>
</body>
</html>
```
FILE: styles.css
```css
* {
    box-sizing: border-box;
}

body {
    margin: 0;
    height: 100vh;
    display: flex;
    flex-direction: column;
    overflow: hidden;
    background-color: #000;
    color: #fff;
    font-family: Inter, sans-serif;
    font-size: 9px;
}

h2, h3, p, ul {
    margin: 0;
    padding: 0;
}

button {
    display: flex;
    align-items: center;
    justify-content: center;
    padding: 0;
    border: none;
    background: none;
    color: inherit;
    font: inherit;
    cursor: pointer;
}

input {
    flex: 1;
    min-width: 0;
    padding: 0;
    border: none;
    outline: none;
    background: none;
    color: inherit;
    font: inherit;
}

a {
    color: inherit;
    text-decoration: none;
}

svg {
    flex: none;
    display: block;
}

.sprite {
    position: absolute;
    width: 0;
    height: 0;
}

/* icon sizes */
.ic-8 { width: 8px; height: 8px; }
.ic-9 { width: 9px; height: 9px; }
.ic-10 { width: 10px; height: 10px; }
.ic-11 { width: 11px; height: 11px; }
.ic-12 { width: 12px; height: 12px; }
.ic-13 { width: 13px; height: 13px; }
.ic-16 { width: 16px; height: 16px; }
.ic-18 { width: 18px; height: 18px; }
.ic-22 { width: 22px; height: 22px; }
.ic-inf { width: 13px; height: 8px; }

/* colours */
.green { color: #53fc18; }
.orange { color: #ff9315; }
.peach { color: #ffb571; }
.purple { color: #9547f8; }
.blue { color: #72acf0; }
.rose { color: #e05c83; }
.blush { color: #f2cfe0; }
.crimson { color: #c4043c; }
.cream { color: #ffd899; }
.pink { color: #f0a6c4; }
.teal { color: #19e0a5; }
.lilac { color: #c79bf2; }
.cat-green { color: #158c1d; }
.cat-red { color: #8f0f22; }

/* browser */
.browser {
    background-color: #7822ba;
    border-bottom: 1px solid #69499a;
    font-family: Roboto, "Noto Sans", sans-serif;
    color: #f6ecfd;
}

.tabstrip {
    display: flex;
    align-items: center;
    height: 27px;
    padding: 0 12px 0 4px;
    background-color: #48166f;
}

.tab-search {
    width: 19px;
    height: 19px;
    border-radius: 6px;
    background-color: #6b1fa6;
}

.tab {
    display: flex;
    align-items: center;
    align-self: flex-end;
    width: 154px;
    height: 23px;
    margin-left: 4px;
    padding: 0 6px 3px 5px;
    border-radius: 6px 6px 0 0;
    background-color: #7822ba;
}

.tab-title {
    flex: 1;
    margin-left: 5px;
    font-size: 8px;
}

.new-tab {
    margin-left: 9px;
    color: #b58fd6;
}

.window-buttons {
    display: flex;
    gap: 23px;
    margin-left: auto;
    color: #a67fc6;
}

.toolbar {
    display: flex;
    align-items: center;
    height: 30px;
    padding: 0 10px;
    gap: 15px;
}

.toolbar .dim {
    color: #b17ddb;
}

.omnibox {
    flex: 1;
    display: flex;
    align-items: center;
    gap: 4px;
    height: 22px;
    margin: 0 -3px;
    padding: 0 11px 0 2px;
    border-radius: 11px;
    background-color: #622096;
}

.site-info {
    width: 18px;
    height: 18px;
    border-radius: 9px;
    background-color: #6f27a8;
}

/* host is bright, path is dimmed */
.url {
    background: linear-gradient(90deg, #f8f0fd 80px, #bd92dd 80px);
    background-clip: text;
    -webkit-background-clip: text;
    color: transparent;
}

.toolbar-end {
    display: flex;
    align-items: center;
    gap: 11px;
}

.bar {
    width: 1px;
    height: 10px;
    background-color: #501a7c;
}

.bookmarks {
    display: flex;
    align-items: center;
    gap: 11px;
    height: 23px;
    padding: 0 8px 4px;
    font-size: 8px;
}

.bookmarks .bar {
    margin-right: -2px;
}

.bookmarks a {
    display: flex;
    align-items: center;
    gap: 4px;
}

.okey {
    width: 11px;
    height: 11px;
    border-radius: 50%;
    background-color: #2a1745;
    color: #fff;
    font: 900 9px/10px Inter, sans-serif;
    text-align: center;
}

/* dashboard */
.app {
    flex: 1;
    min-height: 0;
    display: grid;
    grid-template-columns: 37px 1fr 42px;
    grid-template-rows: 40px 1fr;
    background-color: #141517;
}

.app-header {
    grid-column: 1 / -1;
    display: flex;
    align-items: center;
    padding: 0 26px 0 16px;
}

.logo {
    display: flex;
    align-items: flex-start;
    margin-left: 15px;
    color: #53fc18;
}

.logo-word {
    font-size: 20px;
    line-height: 24px;
    font-weight: 900;
    -webkit-text-stroke: 2px #53fc18;
}

.logo-beta {
    color: #fff;
    font-size: 5px;
    line-height: 10px;
    font-weight: 700;
}

.profile {
    margin-left: auto;
}

.side {
    display: flex;
    flex-direction: column;
    align-items: center;
    gap: 1px;
    padding-top: 7px;
}

.side button {
    width: 21px;
    height: 26px;
    border-radius: 2px;
}

.side .active {
    background-color: #323436;
}

.panels {
    display: grid;
    grid-template-columns: 321px 1fr;
    gap: 2px;
    min-height: 0;
    padding: 2px 3px 3px;
    background-color: #000;
}

.panel {
    display: flex;
    flex-direction: column;
    min-width: 0;
    min-height: 0;
    border-radius: 3px;
    background-color: #141517;
    overflow: hidden;
}

.panel-header {
    flex: none;
    display: flex;
    align-items: center;
    height: 27px;
    padding: 0 12px 0 6px;
    background-color: #1e2022;
}

.panel-header h2 {
    margin-left: 6px;
    font-size: 9px;
    font-weight: 700;
}

.filter {
    margin: 0 18px 0 auto;
    font-size: 9px;
    font-weight: 700;
}

.push {
    margin-left: auto;
}

/* activity feed */
.feed {
    flex: 1;
    min-height: 0;
    display: flex;
    margin: 5px 11px 5px;
    overflow: hidden;
}

.feed ul {
    flex: 1;
    display: flex;
    flex-direction: column;
    margin-bottom: -9px;
    list-style: none;
}

.feed li {
    flex: 1 0 35px;
    display: flex;
    align-items: flex-start;
    gap: 9px;
    padding-top: 5px;
    border-bottom: 1px solid #222426;
    color: #e8e9ea;
}

.feed li.tall {
    flex-basis: 59px;
}

.feed li > svg {
    margin-top: 4px;
}

.feed li > svg.green {
    color: #53fc18;
}

.feed li > div {
    flex: 1;
}

.feed h3 {
    color: #fff;
    font-size: 9px;
    line-height: 14px;
    font-weight: 700;
}

.feed p {
    color: #a3a6aa;
    font-size: 8px;
    line-height: 13px;
    font-weight: 600;
}

.feed p b {
    color: #53fc18;
    font-weight: 700;
}

.feed .kicks {
    display: flex;
    align-items: center;
    gap: 3px;
    font-weight: 500;
}

.feed .kicks svg {
    color: #2fe874;
}

.feed p.sent {
    line-height: 9px;
}

.feed time {
    color: #808387;
    font-size: 8px;
    line-height: 14px;
}

/* gifters */
.podium {
    position: relative;
    flex: none;
    display: flex;
    align-items: center;
    justify-content: center;
    height: 49px;
    padding-bottom: 5px;
    border-bottom: 1px solid #2a2c2e;
    color: #a9acb0;
}

.medal {
    position: relative;
    display: flex;
    align-items: center;
    justify-content: center;
    width: 10px;
    height: 11px;
    color: #d9dadd;
}

.medal svg {
    width: 100%;
    height: 100%;
}

.medal i {
    position: absolute;
    color: #4c3c22;
    font-size: 6px;
    font-style: normal;
    font-weight: 700;
}

.medal-big {
    width: 19px;
    height: 21px;
    color: #f3ae22;
}

.medal-big i {
    font-size: 11px;
}

.medal.bronze {
    color: #c98d62;
}

.first {
    display: flex;
    flex-direction: column;
    margin: 0 7px 0 4px;
    line-height: 13px;
}

.first strong,
.runners strong {
    font-weight: 700;
}

.first span {
    display: flex;
    align-items: center;
    gap: 4px;
}

.runners {
    display: grid;
    grid-template-columns: 10px auto auto 8px;
    align-items: center;
    gap: 0 4px;
    line-height: 16px;
}

.collapse {
    position: absolute;
    bottom: -7px;
    left: 50%;
    width: 22px;
    height: 13px;
    margin-left: -12px;
    background-color: #141517;
}

/* messages */
.messages {
    position: relative;
    flex: 1;
    min-height: 0;
    display: flex;
    margin: 5px 1px 2px 9px;
    overflow: hidden;
}

.message-list {
    flex: 1;
    display: flex;
    flex-direction: column;
    margin-top: -10px;
    margin-right: 10px;
}

.message-list p,
.new-messages {
    flex: 1 0 20px;
    min-height: 0;
    display: flex;
    align-items: center;
    gap: 3px;
    padding: 0 4px;
    color: #f1f2f3;
    line-height: 12px;
}

.message-list p > svg {
    width: 12px;
    height: 12px;
}

.message-list b {
    font-weight: 700;
}

.message-list svg.emote {
    width: 19px;
    height: 19px;
}

.top-one {
    width: 12px;
    height: 12px;
    border-radius: 50%;
    background-color: #fab422;
    color: #5e3b05;
    font-size: 8px;
    font-style: normal;
    font-weight: 800;
    text-align: center;
}

.message-list .mention {
    border: 1px solid #4aa82e;
    border-radius: 5px;
}

.new-messages {
    gap: 6px;
    padding: 0;
    color: #53fc18;
    font-weight: 600;
}

.new-messages::before,
.new-messages::after {
    content: "";
    flex: 1;
    height: 1px;
    background-color: #4aa82e;
}

.scroll-thumb {
    position: absolute;
    right: 0;
    bottom: 0;
    width: 2px;
    height: 46%;
    border-radius: 1px;
    background-color: #5a5c5f;
}

/* composer */
.composer {
    flex: none;
    padding: 4px 14px 7px 13px;
}

.notice {
    display: flex;
    align-items: center;
    gap: 3px;
    height: 13px;
    color: #8a8d91;
    font-size: 8px;
}

.emotes {
    display: flex;
    justify-content: space-between;
    margin: 3px 0 4px;
}

.emotes svg {
    width: 16px;
    height: 16px;
}

.input-box {
    display: flex;
    align-items: center;
    gap: 11px;
    height: 30px;
    padding: 0 10px 0 9px;
    border: 1px solid #4b4d50;
    border-radius: 2px;
    font-size: 10px;
}

.input-box input::placeholder {
    color: #74777b;
    opacity: 1;
}

.mic {
    color: #a52fd0;
}

.actions {
    display: flex;
    align-items: center;
    margin-top: 6px;
    padding-left: 5px;
    gap: 16px;
}

.points {
    gap: 2px;
}

.actions .predict {
    width: 20px;
    height: 21px;
    margin-right: -7px;
    border-radius: 2px;
    background-color: #24e5b5;
}

.send {
    width: 49px;
    height: 22px;
    border-radius: 2px;
    background-color: #53fc18;
    color: #12400a;
    font-weight: 600;
}

/* right tools */
.tools {
    position: relative;
    display: flex;
    flex-direction: column;
    align-items: center;
    gap: 10px;
    padding: 7px 1px 0 0;
}

.tools button {
    width: 27px;
    height: 27px;
    border-radius: 2px;
}

.tools .filled {
    background-color: #2e3033;
}

.tools .on {
    border: 1px solid #4aa82e;
}

.tools hr {
    width: 16px;
    height: 2px;
    margin: 0;
    border: none;
    background-color: #25272a;
}

.tools .clip {
    width: 23px;
    height: 25px;
    background-color: #0be00f;
}

.tools .support {
    position: absolute;
    right: 13px;
    bottom: 13px;
    width: 32px;
    height: 32px;
    border-radius: 50%;
    background-color: #14f80e;
}

/* task bar */
.taskbar {
    flex: none;
    display: flex;
    gap: 1px;
    height: 20px;
    background: linear-gradient(90deg, #1f1f1f 78%, #30371f 84%, #2c3226 100%);
    font-family: Roboto, "Noto Sans", sans-serif;
}

.taskbar button {
    width: 24px;
    height: 20px;
}

.taskbar .running {
    box-shadow: inset 0 -1px #b56fd8;
}

.taskbar .current {
    background-color: #4b4b4f;
}

.tray {
    display: flex;
    align-items: center;
    gap: 5px;
    margin-left: auto;
    padding-right: 16px;
}

.tray time {
    font-size: 8px;
}

.tray .center {
    margin-left: 6px;
}
```
